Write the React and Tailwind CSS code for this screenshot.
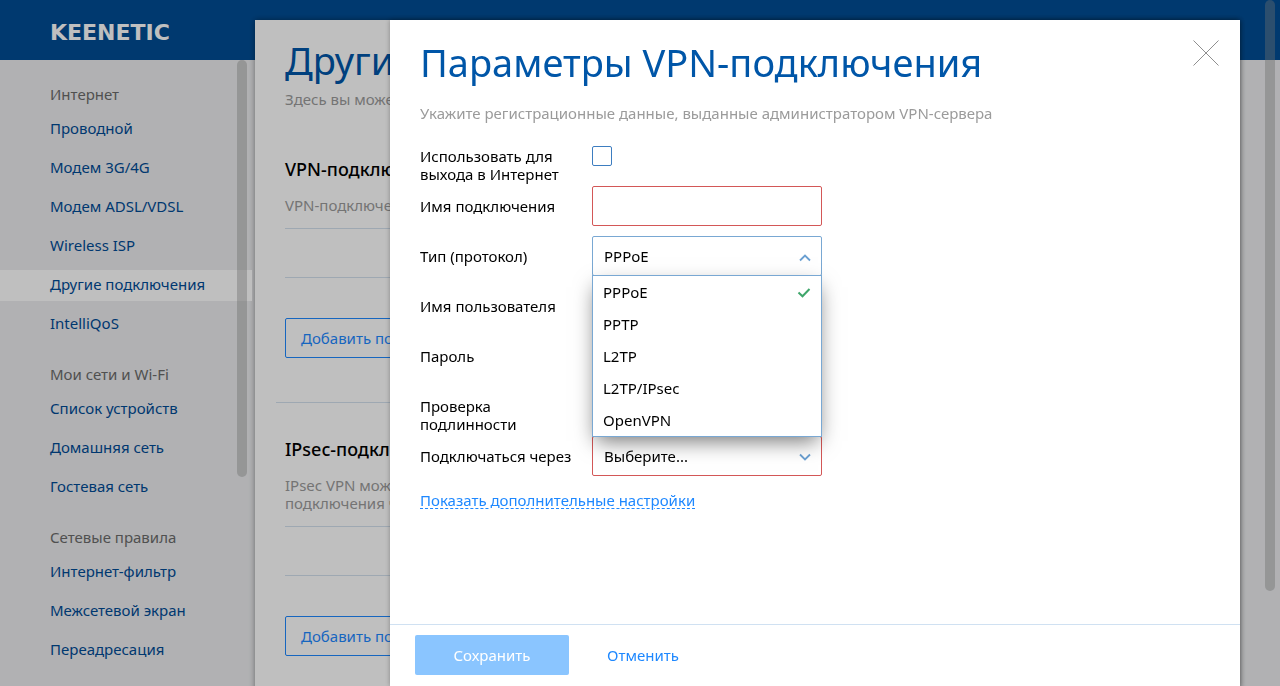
const NAV = [
  { title: "Интернет", items: ["Проводной", "Модем 3G/4G", "Модем ADSL/VDSL", "Wireless ISP", "Другие подключения", "IntelliQoS"] },
  { title: "Мои сети и Wi-Fi", items: ["Список устройств", "Домашняя сеть", "Гостевая сеть"] },
  { title: "Сетевые правила", items: ["Интернет-фильтр", "Межсетевой экран", "Переадресация"] },
];
const ACTIVE = "Другие подключения";
const PROTOCOLS = ["PPPoE", "PPTP", "L2TP", "L2TP/IPsec", "OpenVPN"];

const field = "block h-10 w-full rounded-xs border bg-white px-[11px] outline-none";
const navLine = "block pb-0.5 pl-[50px] leading-[29px]";

function Sidebar() {
  return (
    <nav className="relative w-[255px] shrink-0 pt-5">
      {NAV.map((group) => (
        <section key={group.title} className="mb-5">
          <h2 className={`${navLine} mb-[3px] text-[#6b6b6b]`}>{group.title}</h2>
          <ul className="mr-[3px] flex flex-col gap-2">
            {group.items.map((item) => (
              <li key={item}>
                <a href="#" className={`${navLine} text-[#004b96] ${item === ACTIVE ? "bg-white" : ""}`}>
                  {item}
                </a>
              </li>
            ))}
          </ul>
        </section>
      ))}
      <div className="absolute top-0 right-2 h-[417px] w-2.5 rounded-full bg-[#929292]/40" />
    </nav>
  );
}

function Section({ title, children, action }) {
  return (
    <section>
      <h2 className="text-lg leading-6 font-medium text-black">{title}</h2>
      <p className="mt-[15px] leading-[18px] text-[#9b9b9b]">{children}</p>
      <div className="mt-3.5 h-[50px] border-y border-[#d3e0ee]" />
      <button type="button" className="mt-10 h-10 rounded-xs border border-[#1e88ff] px-[15px] text-[#1e88ff]">
        {action}
      </button>
    </section>
  );
}

function Row({ label, id, children }) {
  return (
    <div className="flex min-h-[50px] items-start">
      <label htmlFor={id} className="w-[172px] shrink-0 pt-[11px] pr-5 leading-[18px]">
        {label}
      </label>
      <div className="relative w-[230px]">{children}</div>
    </div>
  );
}

function Chevron({ up }) {
  return (
    <svg
      className="pointer-events-none absolute top-4 right-[11px] h-2.5 w-3"
      viewBox="0 0 12 10"
      fill="none"
      stroke="#6ba0d2"
      strokeWidth="1.8"
    >
      <path d={up ? "M1 8.5 6 3.5 11 8.5" : "M1 2.5 6 7.5 11 2.5"} />
    </svg>
  );
}

function VpnDialog() {
  return (
    <div
      role="dialog"
      aria-labelledby="dialog-title"
      className="relative flex flex-1 flex-col bg-white text-black shadow-[0_0_5px_rgba(0,0,0,0.3)]"
    >
      <button type="button" aria-label="Закрыть" className="absolute top-[19px] right-5">
        <svg className="h-7 w-7" viewBox="0 0 28 28" stroke="#8f8f8f" strokeWidth="1">
          <path d="M1.5 1.5 26.5 26.5M26.5 1.5 1.5 26.5" />
        </svg>
      </button>
      <form className="flex-1 px-[30px] pt-[19px]">
        <h1 id="dialog-title" className="text-[38px] leading-[46px] text-[#0056a8]">
          Параметры VPN-подключения
        </h1>
        <p className="mt-[19px] mb-3.5 leading-[18px] text-[#9b9b9b]">
          Укажите регистрационные данные, выданные администратором VPN-сервера
        </p>
        <Row id="use-internet" label="Использовать для выхода в Интернет">
          <input
            id="use-internet"
            type="checkbox"
            className="mt-2.5 block h-5 w-5 appearance-none rounded-xs border border-[#3d7dc0] bg-white"
          />
        </Row>
        <Row id="conn-name" label="Имя подключения">
          <input id="conn-name" type="text" className={`${field} border-[#d35757]`} />
        </Row>
        <Row id="protocol" label="Тип (протокол)">
          <select id="protocol" defaultValue="PPPoE" className={`${field} appearance-none border-[#79a8d3]`}>
            {PROTOCOLS.map((p) => (
              <option key={p}>{p}</option>
            ))}
          </select>
          <Chevron up />
          <ul
            role="listbox"
            aria-label="Тип (протокол)"
            className="absolute inset-x-0 top-[39px] z-10 border border-[#79a8d3] bg-white shadow-[0_8px_20px_-4px_rgba(0,0,0,0.55)]"
          >
            {PROTOCOLS.map((p) => (
              <li
                key={p}
                role="option"
                aria-selected={p === "PPPoE"}
                className="flex h-8 items-center justify-between px-2.5 pt-px"
              >
                {p}
                {p === "PPPoE" && (
                  <svg className="h-3 w-3.5" viewBox="0 0 14 12" fill="none" stroke="#3fa66b" strokeWidth="2">
                    <path d="M1.5 5.5 5.5 9.3 12.5 2" />
                  </svg>
                )}
              </li>
            ))}
          </ul>
        </Row>
        <Row id="user" label="Имя пользователя">
          <input id="user" type="text" className={`${field} border-[#79a8d3]`} />
        </Row>
        <Row id="password" label="Пароль">
          <input id="password" type="password" className={`${field} border-[#79a8d3]`} />
        </Row>
        <Row id="auth" label="Проверка подлинности">
          <select id="auth" className={`${field} appearance-none border-[#79a8d3]`}>
            <option>Авто</option>
          </select>
        </Row>
        <Row id="via" label="Подключаться через">
          <select id="via" className={`${field} appearance-none border-[#d35757]`}>
            <option>Выберите...</option>
          </select>
          <Chevron />
        </Row>
        <a
          href="#"
          className="mt-[5px] inline-block leading-[18px] text-[#1e88ff] underline decoration-dashed decoration-1 underline-offset-2"
        >
          Показать дополнительные настройки
        </a>
      </form>
      <footer className="flex gap-2.5 border-t border-[#d0e1f2] px-[25px] pt-2.5 pb-[11px]">
        <button type="button" className="h-10 w-[154px] rounded-xs bg-[#8ac5ff] text-white">
          Сохранить
        </button>
        <button type="button" className="h-10 px-7 text-[#1e88ff]">
          Отменить
        </button>
      </footer>
    </div>
  );
}

export default function App() {
  return (
    <div className="relative h-screen overflow-hidden bg-[#ecedef] font-['Noto_Sans',sans-serif] text-[15px]">
      <header className="flex h-[60px] items-center bg-[#004d95] pt-1 pl-[50px]">
        <span className="font-['DejaVu_Sans',sans-serif] text-[22px] font-bold text-white">KEENETIC</span>
      </header>
      <div className="flex">
        <Sidebar />
        <main className="-mt-10 mr-10 min-h-screen flex-1 bg-white px-[30px] pt-[17px] shadow-[0_0_6px_rgba(0,0,0,0.4)]">
          <h1 className="text-[38px] leading-[46px] text-[#0056a8]">Другие подключения</h1>
          <p className="mt-[7px] mb-[49px] leading-[18px] text-[#9b9b9b]">Здесь вы можете настроить другие подключения</p>
          <Section title="VPN-подключения" action="Добавить подключение">
            VPN-подключения к удаленным серверам
          </Section>
          <hr className="-mx-[9px] mt-11 mb-[34px] border-[#d3e0ee]" />
          <Section title="IPsec-подключения" action="Добавить подключение">
            IPsec VPN можно использовать для безопасного
            <br />
            подключения через Интернет
          </Section>
        </main>
      </div>
      <div className="absolute top-0 right-[5px] h-[591px] w-2.5 rounded-full bg-[#929292]/40" />
      <div className="fixed inset-0 flex bg-black/25 pt-5 pr-10 pl-[390px]">
        <VpnDialog />
      </div>
    </div>
  );
}
